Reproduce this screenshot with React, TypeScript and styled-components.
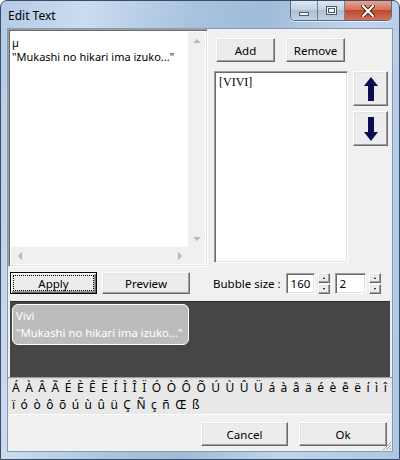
import React from "react";
import styled, { createGlobalStyle } from "styled-components";

const GlobalStyle = createGlobalStyle`
  html, body {
    margin: 0;
    padding: 0;
    width: 400px;
    height: 460px;
    overflow: hidden;
    background: #ffffff;
  }
  * {
    box-sizing: border-box;
  }
`;

const upperChars = "Á À Â Ã É È Ê Ë Í Ì Î Ï Ó Ò Ô Õ Ú Ù Û Ü á à â ä é è ê ë í ì î".split(" ");
const lowerChars = "ï ó ò ô õ ú ù û ü Ç Ñ ç ñ Œ ß".split(" ");

function App() {
  return (
    <>
      <GlobalStyle />
      <Window>
        <TitleBar>
          <Title>Edit Text</Title>
          <CaptionGroup>
            <CaptionButton>
              <MinGlyph />
            </CaptionButton>
            <CaptionButton>
              <MaxGlyph />
            </CaptionButton>
            <CloseButton>
              <svg width="14" height="12" viewBox="0 0 14 12">
                <path
                  d="M2 1 L12 11 M12 1 L2 11"
                  stroke="#3d1a14"
                  strokeWidth="4"
                  strokeLinecap="square"
                />
                <path
                  d="M2 1 L12 11 M12 1 L2 11"
                  stroke="#ffffff"
                  strokeWidth="2.2"
                  strokeLinecap="square"
                />
              </svg>
            </CloseButton>
          </CaptionGroup>
        </TitleBar>

        <Client>
          <TopRow>
            <Editor>
              <EditorText>
                <EditorLine>µ</EditorLine>
                <EditorLine>"Mukashi no hikari ima izuko..."</EditorLine>
              </EditorText>
              <VScroll>
                <Arrow dir="up" />
                <Arrow dir="down" />
              </VScroll>
              <HScroll>
                <Arrow dir="left" />
                <Arrow dir="right" />
              </HScroll>
              <Corner />
            </Editor>

            <SideColumn>
              <ButtonRow>
                <Button width={59}>Add</Button>
                <Button width={59}>Remove</Button>
              </ButtonRow>
              <ListRow>
                <ListBox>
                  <ListItem>[VIVI]</ListItem>
                </ListBox>
                <ArrowColumn>
                  <IconButton>
                    <svg width="14" height="24" viewBox="0 0 14 24">
                      <path d="M7 0 L14 9 L10 9 L10 24 L4 24 L4 9 L0 9 Z" fill="#0b0b4f" />
                    </svg>
                  </IconButton>
                  <IconButton>
                    <svg width="14" height="24" viewBox="0 0 14 24">
                      <path d="M7 24 L14 15 L10 15 L10 0 L4 0 L4 15 L0 15 Z" fill="#0b0b4f" />
                    </svg>
                  </IconButton>
                </ArrowColumn>
              </ListRow>
            </SideColumn>
          </TopRow>

          <ControlRow>
            <DefaultButton width={87}>
              <FocusRing>Apply</FocusRing>
            </DefaultButton>
            <Button width={88} short>
              Preview
            </Button>
            <SizeLabel>Bubble size :</SizeLabel>
            <NumberField width={29}>160</NumberField>
            <Spinner>
              <SpinHalf>
                <SpinTri dir="up" />
              </SpinHalf>
              <SpinHalf>
                <SpinTri dir="down" />
              </SpinHalf>
            </Spinner>
            <NumberField width={31}>2</NumberField>
            <Spinner>
              <SpinHalf>
                <SpinTri dir="up" />
              </SpinHalf>
              <SpinHalf>
                <SpinTri dir="down" />
              </SpinHalf>
            </Spinner>
          </ControlRow>

          <PreviewPanel>
            <Bubble>
              <BubbleLine>Vivi</BubbleLine>
              <BubbleLine>"Mukashi no hikari ima izuko..."</BubbleLine>
            </Bubble>
          </PreviewPanel>

          <CharPanel>
            <CharRow>
              {upperChars.map((c, i) => (
                <CharKey key={i}>{c}</CharKey>
              ))}
            </CharRow>
            <CharRow>
              {lowerChars.map((c, i) => (
                <CharKey key={i}>{c}</CharKey>
              ))}
            </CharRow>
          </CharPanel>

          <FooterRow>
            <Button width={87}>Cancel</Button>
            <Button width={88}>Ok</Button>
          </FooterRow>
          <Grip>
            <svg width="10" height="10" viewBox="0 0 10 10">
              <path d="M9 1 L1 9 M9 4 L4 9 M9 7 L7 9" stroke="#a0a0a0" strokeWidth="1" />
            </svg>
          </Grip>
        </Client>
      </Window>
    </>
  );
}

export default App;

const uiFont = `"Noto Sans", "Open Sans", sans-serif`;

const Window = styled.div`
  width: 400px;
  height: 460px;
  display: flex;
  flex-direction: column;
  padding: 0 7px 8px 7px;
  border: 1px solid #3c4c60;
  border-radius: 7px 7px 0 0;
  background: linear-gradient(
    100deg,
    #b3cbe6 0%,
    #cadcf0 18%,
    #a9c3df 40%,
    #9fbbd9 55%,
    #bfd4ec 75%,
    #adc6e2 100%
  );
  font-family: ${uiFont};
`;

const TitleBar = styled.div`
  height: 28px;
  display: flex;
  align-items: flex-start;
  justify-content: space-between;
`;

const Title = styled.div`
  padding-top: 6px;
  font-size: 12px;
  color: #000;
`;

const CaptionGroup = styled.div`
  display: flex;
  height: 20px;
  border: 1px solid #5a6b80;
  border-top: none;
  border-radius: 0 0 5px 5px;
  overflow: hidden;
  box-shadow: 0 1px 0 rgba(255, 255, 255, 0.6);
`;

const CaptionButton = styled.div`
  width: 27px;
  height: 19px;
  display: flex;
  align-items: center;
  justify-content: center;
  border-right: 1px solid #6f8196;
  background: linear-gradient(#dce6f1, #c3d1e1 48%, #aebfd3 50%, #c2d2e4);
`;

const CloseButton = styled.div`
  width: 46px;
  height: 19px;
  display: flex;
  align-items: center;
  justify-content: center;
  background: linear-gradient(#e8a493, #d4705a 48%, #c0452d 50%, #d1735b);
`;

const MinGlyph = styled.div`
  width: 10px;
  height: 4px;
  margin-top: 6px;
  background: #f4f6f9;
  border: 1px solid #4a5768;
`;

const MaxGlyph = styled.div`
  width: 11px;
  height: 9px;
  border: 1px solid #4a5768;
  background: #f4f6f9;
  box-shadow: inset 0 0 0 1px #f4f6f9, inset 0 0 0 2px #4a5768;
`;

const Client = styled.div`
  position: relative;
  flex: 1;
  display: flex;
  flex-direction: column;
  background: #f0f0f0;
  outline: 1px solid #8a9bb0;
`;

const TopRow = styled.div`
  display: flex;
  height: 238px;
`;

const sunken = `
  border: 1px solid;
  border-color: #a0a0a0 #ffffff #ffffff #a0a0a0;
  box-shadow: inset 1px 1px 0 #696969, inset -1px -1px 0 #e3e3e3;
`;

const raised = `
  border: 1px solid;
  border-color: #ffffff #696969 #696969 #ffffff;
  box-shadow: inset -1px -1px 0 #a0a0a0, inset 1px 1px 0 #e3e3e3;
  background: #ececec;
`;

const Editor = styled.div`
  width: 200px;
  height: 100%;
  display: grid;
  grid-template-columns: 1fr 17px;
  grid-template-rows: 1fr 17px;
  padding: 2px;
  background: #fff;
  ${sunken}
`;

const EditorText = styled.div`
  padding: 3px 0 0 1px;
  overflow: hidden;
`;

const EditorLine = styled.div`
  font-size: 11px;
  line-height: 15px;
  height: 14px;
  color: #000;
  white-space: nowrap;
`;

const VScroll = styled.div`
  display: flex;
  flex-direction: column;
  justify-content: space-between;
  background: #f0f0f0;
`;

const HScroll = styled.div`
  display: flex;
  justify-content: space-between;
  background: #f0f0f0;
`;

const Corner = styled.div`
  background: #f0f0f0;
`;

type Dir = "up" | "down" | "left" | "right";

const arrowBorder = (dir: Dir) => {
  switch (dir) {
    case "up":
      return "border-width: 0 4px 4px 4px; border-color: transparent transparent #b8b8b8 transparent;";
    case "down":
      return "border-width: 4px 4px 0 4px; border-color: #b8b8b8 transparent transparent transparent;";
    case "left":
      return "border-width: 4px 4px 4px 0; border-color: transparent #b8b8b8 transparent transparent;";
    default:
      return "border-width: 4px 0 4px 4px; border-color: transparent transparent transparent #b8b8b8;";
  }
};

const ArrowCell = styled.div`
  width: 17px;
  height: 17px;
  display: flex;
  align-items: center;
  justify-content: center;
`;

const Tri = styled.div<{ dir: Dir }>`
  width: 0;
  height: 0;
  border-style: solid;
  ${(p) => arrowBorder(p.dir)}
`;

const Arrow = ({ dir }: { dir: Dir }) => (
  <ArrowCell>
    <Tri dir={dir} />
  </ArrowCell>
);

const SideColumn = styled.div`
  display: flex;
  flex-direction: column;
  padding-left: 6px;
`;

const ButtonRow = styled.div`
  display: flex;
  gap: 11px;
  margin-top: 9px;
  padding-left: 2px;
`;

const Button = styled.div<{ width: number; short?: boolean }>`
  width: ${(p) => p.width}px;
  height: ${(p) => (p.short ? 22 : 24)}px;
  display: flex;
  align-items: center;
  justify-content: center;
  font-size: 11.5px;
  color: #000;
  ${raised}
`;

const DefaultButton = styled.div<{ width: number }>`
  width: ${(p) => p.width}px;
  height: 22px;
  display: flex;
  align-items: center;
  justify-content: center;
  padding: 2px;
  font-size: 11.5px;
  color: #000;
  background: #ececec;
  border: 1px solid #000;
  box-shadow: inset 1px 1px 0 #ffffff, inset -1px -1px 0 #696969,
    inset -2px -2px 0 #a0a0a0;
`;

const FocusRing = styled.div`
  width: 100%;
  height: 100%;
  display: flex;
  align-items: center;
  justify-content: center;
  border: 1px dotted #000;
`;

const ListRow = styled.div`
  display: flex;
  margin-top: 9px;
`;

const ListBox = styled.div`
  width: 134px;
  height: 192px;
  padding: 3px 4px;
  background: #fff;
  ${sunken}
`;

const ListItem = styled.div`
  font-family: "Liberation Serif", serif;
  font-size: 12px;
  line-height: 14px;
  color: #000;
`;

const ArrowColumn = styled.div`
  display: flex;
  flex-direction: column;
  gap: 5px;
  margin-left: 5px;
`;

const IconButton = styled.div`
  width: 35px;
  height: 35px;
  display: flex;
  align-items: center;
  justify-content: center;
  ${raised}
`;

const ControlRow = styled.div`
  display: flex;
  align-items: center;
  height: 22px;
  margin-top: 5px;
  padding-left: 2px;
  gap: 5px;
`;

const SizeLabel = styled.div`
  margin-left: 18px;
  font-size: 11.5px;
  color: #000;
  white-space: nowrap;
`;

const NumberField = styled.div<{ width: number }>`
  width: ${(p) => p.width}px;
  height: 21px;
  padding: 1px 4px;
  font-size: 11.5px;
  line-height: 17px;
  color: #000;
  background: #fff;
  ${sunken}
`;

const Spinner = styled.div`
  display: flex;
  flex-direction: column;
  margin-left: -2px;
  gap: 1px;
`;

const SpinHalf = styled.div`
  width: 12px;
  height: 10px;
  display: flex;
  align-items: center;
  justify-content: center;
  ${raised}
`;

const SpinTri = styled.div<{ dir: "up" | "down" }>`
  width: 0;
  height: 0;
  border-style: solid;
  ${(p) =>
    p.dir === "up"
      ? "border-width: 0 1.5px 2px 1.5px; border-color: transparent transparent #000 transparent;"
      : "border-width: 2px 1.5px 0 1.5px; border-color: #000 transparent transparent transparent;"}
`;

const PreviewPanel = styled.div`
  height: 76px;
  margin: 7px 2px 0 2px;
  padding: 2px;
  background: #464646;
  border-top: 1px solid #2a2a2a;
`;

const Bubble = styled.div`
  width: fit-content;
  padding: 2px 5px 3px 3px;
  border: 1px solid #ffffff;
  border-radius: 6px;
  background: #bcbcbc;
`;

const BubbleLine = styled.div`
  font-size: 11.3px;
  line-height: 17px;
  color: #ffffff;
  white-space: nowrap;
`;

const CharPanel = styled.div`
  height: 38px;
  display: flex;
  flex-direction: column;
  justify-content: center;
  padding: 0 4px;
  background: #e8e8e8;
  border-top: 1px solid #a0a0a0;
  border-bottom: 1px solid #ffffff;
  box-shadow: inset 0 1px 0 #d8d8d8;
`;

const CharRow = styled.div`
  display: flex;
  gap: 5.5px;
  height: 17px;
  align-items: center;
`;

const CharKey = styled.span`
  font-size: 12px;
  line-height: 17px;
  color: #000;
`;

const FooterRow = styled.div`
  display: flex;
  justify-content: flex-end;
  gap: 11px;
  margin-top: 7px;
  padding-right: 5px;
`;

const Grip = styled.div`
  position: absolute;
  right: 0;
  bottom: 0;
  width: 10px;
  height: 10px;
  display: flex;
`;
